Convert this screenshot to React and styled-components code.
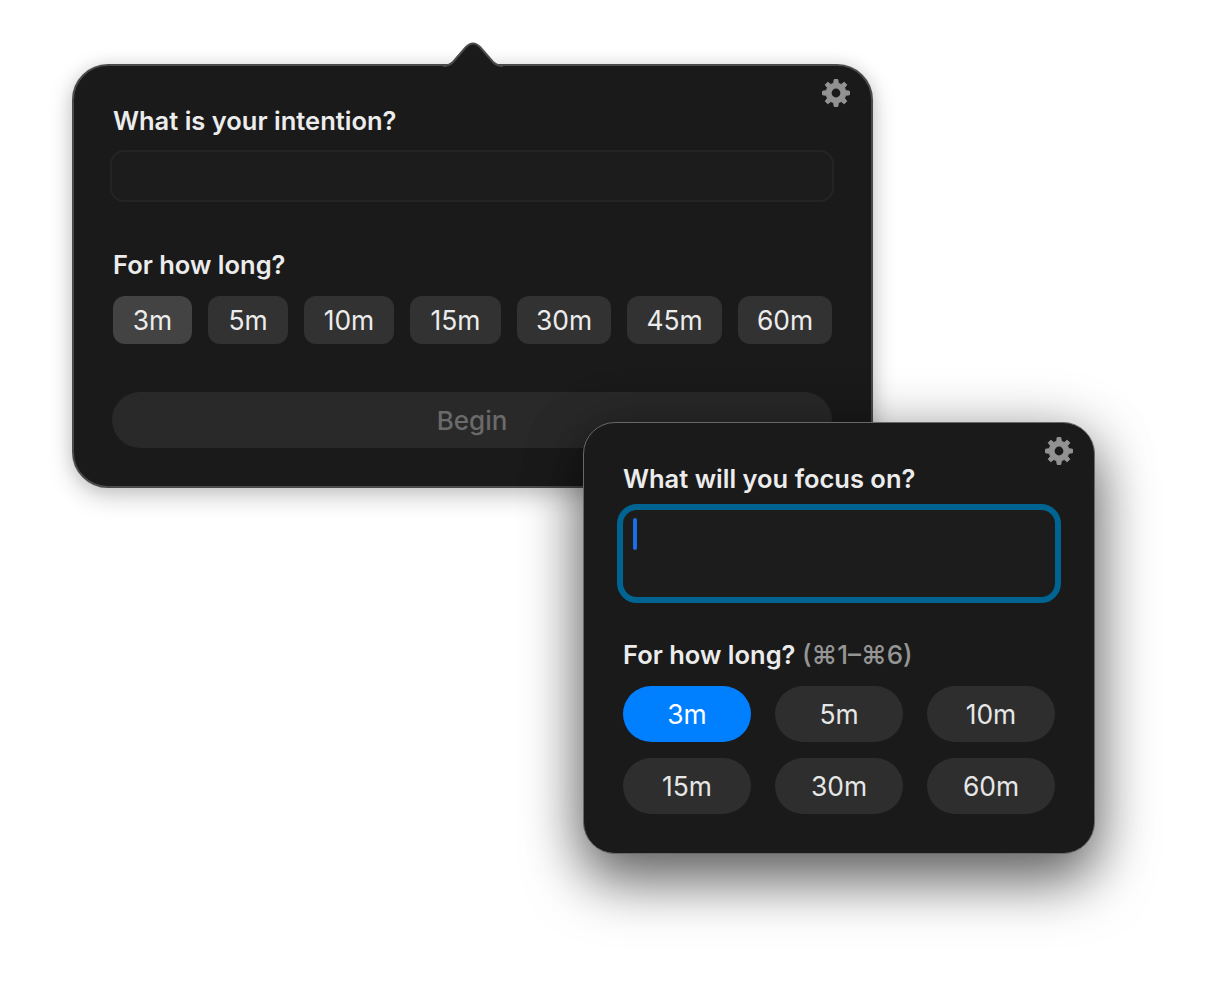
import React from "react";
import styled, { createGlobalStyle } from "styled-components";

const GlobalStyle = createGlobalStyle`
  html, body {
    margin: 0;
    padding: 0;
    background: #fff;
  }
  body {
    font-family: Inter, "Liberation Sans", sans-serif;
    -webkit-font-smoothing: antialiased;
  }
`;

const Desktop = styled.div`
  position: relative;
  width: 1208px;
  height: 1002px;
  overflow: hidden;
  background: #fff;
`;

const Window = styled.div`
  position: absolute;
  box-sizing: border-box;
  background: #1a1a1a;
  display: flex;
  flex-direction: column;
`;

const IntentionWindow = styled(Window)`
  left: 72px;
  top: 64px;
  width: 801px;
  height: 424px;
  padding: 40px 38px 0 39px;
  border-radius: 36px;
  border: 2px solid #4a4a4a;
  box-shadow: 0 8px 24px rgba(0, 0, 0, 0.22), 0 0 16px rgba(0, 0, 0, 0.08);
`;

const FocusWindow = styled(Window)`
  left: 583px;
  top: 422px;
  width: 512px;
  height: 432px;
  padding: 41px 38px 0 39px;
  border-radius: 32px;
  border: 1.5px solid #686868;
  box-shadow: 0 28px 56px rgba(0, 0, 0, 0.5), 0 8px 60px rgba(0, 0, 0, 0.28);
`;

const Notch = styled.svg`
  position: absolute;
  left: 369px;
  top: -24px;
  width: 60px;
  height: 26px;
`;

const Gear = styled.svg`
  position: absolute;
  top: ${(p) => p.$top}px;
  right: ${(p) => p.$right}px;
  width: 28px;
  height: 28px;
`;

const Label = styled.div`
  font-size: 25.5px;
  line-height: 30px;
  font-weight: 600;
  color: #ececec;
  white-space: nowrap;
  margin-top: ${(p) => p.$gap || 0}px;
`;

const Hint = styled.span`
  font-size: 26px;
  font-weight: 500;
  color: #959595;
`;

const PlainInput = styled.div`
  box-sizing: border-box;
  height: 52px;
  width: 724px;
  margin: 14px 0 0 -3px;
  border-radius: 14px;
  border: 2px solid #242424;
  background: #1c1c1c;
`;

const FocusInput = styled.div`
  box-sizing: border-box;
  width: 444px;
  height: 99px;
  margin: 10px 0 0 -6px;
  padding: 8px 10px;
  border-radius: 20px;
  border: 6px solid #006493;
  background: #1c1c1c;
`;

const Caret = styled.div`
  width: 4px;
  height: 32px;
  border-radius: 2px;
  background: #1a6fe6;
`;

const ChipRow = styled.div`
  display: flex;
  justify-content: space-between;
  width: 719px;
  margin-top: 16px;
`;

const Chip = styled.div`
  display: flex;
  align-items: center;
  justify-content: center;
  box-sizing: border-box;
  height: 48px;
  width: ${(p) => p.$w}px;
  border-radius: 12px;
  background: ${(p) => (p.$on ? "#434343" : "#323232")};
  color: #ececec;
  font-size: 26.4px;
  font-weight: 400;
`;

const ChipGrid = styled.div`
  display: grid;
  grid-template-columns: repeat(3, 128px);
  grid-auto-rows: 56px;
  column-gap: 24px;
  row-gap: 16px;
  margin-top: 16px;
`;

const Pill = styled.div`
  display: flex;
  align-items: center;
  justify-content: center;
  border-radius: 28px;
  background: ${(p) => (p.$on ? "#007fff" : "#2e2e2e")};
  color: ${(p) => (p.$on ? "#fff" : "#e6e6e6")};
  font-size: 26.4px;
  font-weight: 400;
`;

const BeginButton = styled.div`
  display: flex;
  align-items: center;
  justify-content: center;
  width: 720px;
  height: 56px;
  margin: 48px 0 0 -1px;
  border-radius: 28px;
  background: #292929;
  color: #6a6a6a;
  font-size: 26px;
  font-weight: 500;
`;

// eight toothed cog, points worked out once rather than typed by hand
const gearPath = (() => {
  const teeth = 8;
  const outer = 13.6;
  const inner = 10;
  const cx = 14;
  const cy = 14;
  const pts = [];
  for (let i = 0; i < teeth; i++) {
    const a = (i * 2 * Math.PI) / teeth - Math.PI / 2;
    const step = (2 * Math.PI) / teeth;
    [
      [inner, -step * 0.3],
      [outer, -step * 0.17],
      [outer, step * 0.17],
      [inner, step * 0.3],
    ].forEach(([r, o]) => {
      pts.push(`${(cx + r * Math.cos(a + o)).toFixed(2)} ${(cy + r * Math.sin(a + o)).toFixed(2)}`);
    });
  }
  return `M${pts.join("L")}Z`;
})();

const Cog = ({ top, right }) => (
  <Gear $top={top} $right={right} viewBox="0 0 28 28">
    <path d={gearPath} fill="#929292" stroke="#929292" strokeWidth="1" strokeLinejoin="round" />
    <circle cx="14" cy="14" r="4.4" fill="#1a1a1a" />
  </Gear>
);

const longChips = [
  ["3m", 79],
  ["5m", 80],
  ["10m", 90],
  ["15m", 91],
  ["30m", 94],
  ["45m", 95],
  ["60m", 94],
];

const shortChips = ["3m", "5m", "10m", "15m", "30m", "60m"];

export default function App() {
  return (
    <Desktop>
      <GlobalStyle />
      <IntentionWindow>
        <Notch viewBox="0 0 60 26">
          <path
            d="M0 24 C5 24 7 23 10 20 L23 5 Q30 -2 37 5 L50 20 C53 23 55 24 60 24 L60 26 L0 26 Z"
            fill="#1a1a1a"
          />
          <path
            d="M0 24 C5 24 7 23 10 20 L23 5 Q30 -2 37 5 L50 20 C53 23 55 24 60 24"
            fill="none"
            stroke="#4a4a4a"
            strokeWidth="2"
          />
        </Notch>
        <Cog top={13} right={21} />
        <Label>What is your intention?</Label>
        <PlainInput />
        <Label $gap={48}>For how long?</Label>
        <ChipRow>
          {longChips.map(([text, w], i) => (
            <Chip key={text} $w={w} $on={i === 0}>
              {text}
            </Chip>
          ))}
        </ChipRow>
        <BeginButton>Begin</BeginButton>
      </IntentionWindow>

      <FocusWindow>
        <Cog top={14} right={21} />
        <Label>What will you focus on?</Label>
        <FocusInput>
          <Caret />
        </FocusInput>
        <Label $gap={37}>
          For how long? <Hint>(⌘1–⌘6)</Hint>
        </Label>
        <ChipGrid>
          {shortChips.map((text, i) => (
            <Pill key={text} $on={i === 0}>
              {text}
            </Pill>
          ))}
        </ChipGrid>
      </FocusWindow>
    </Desktop>
  );
}
